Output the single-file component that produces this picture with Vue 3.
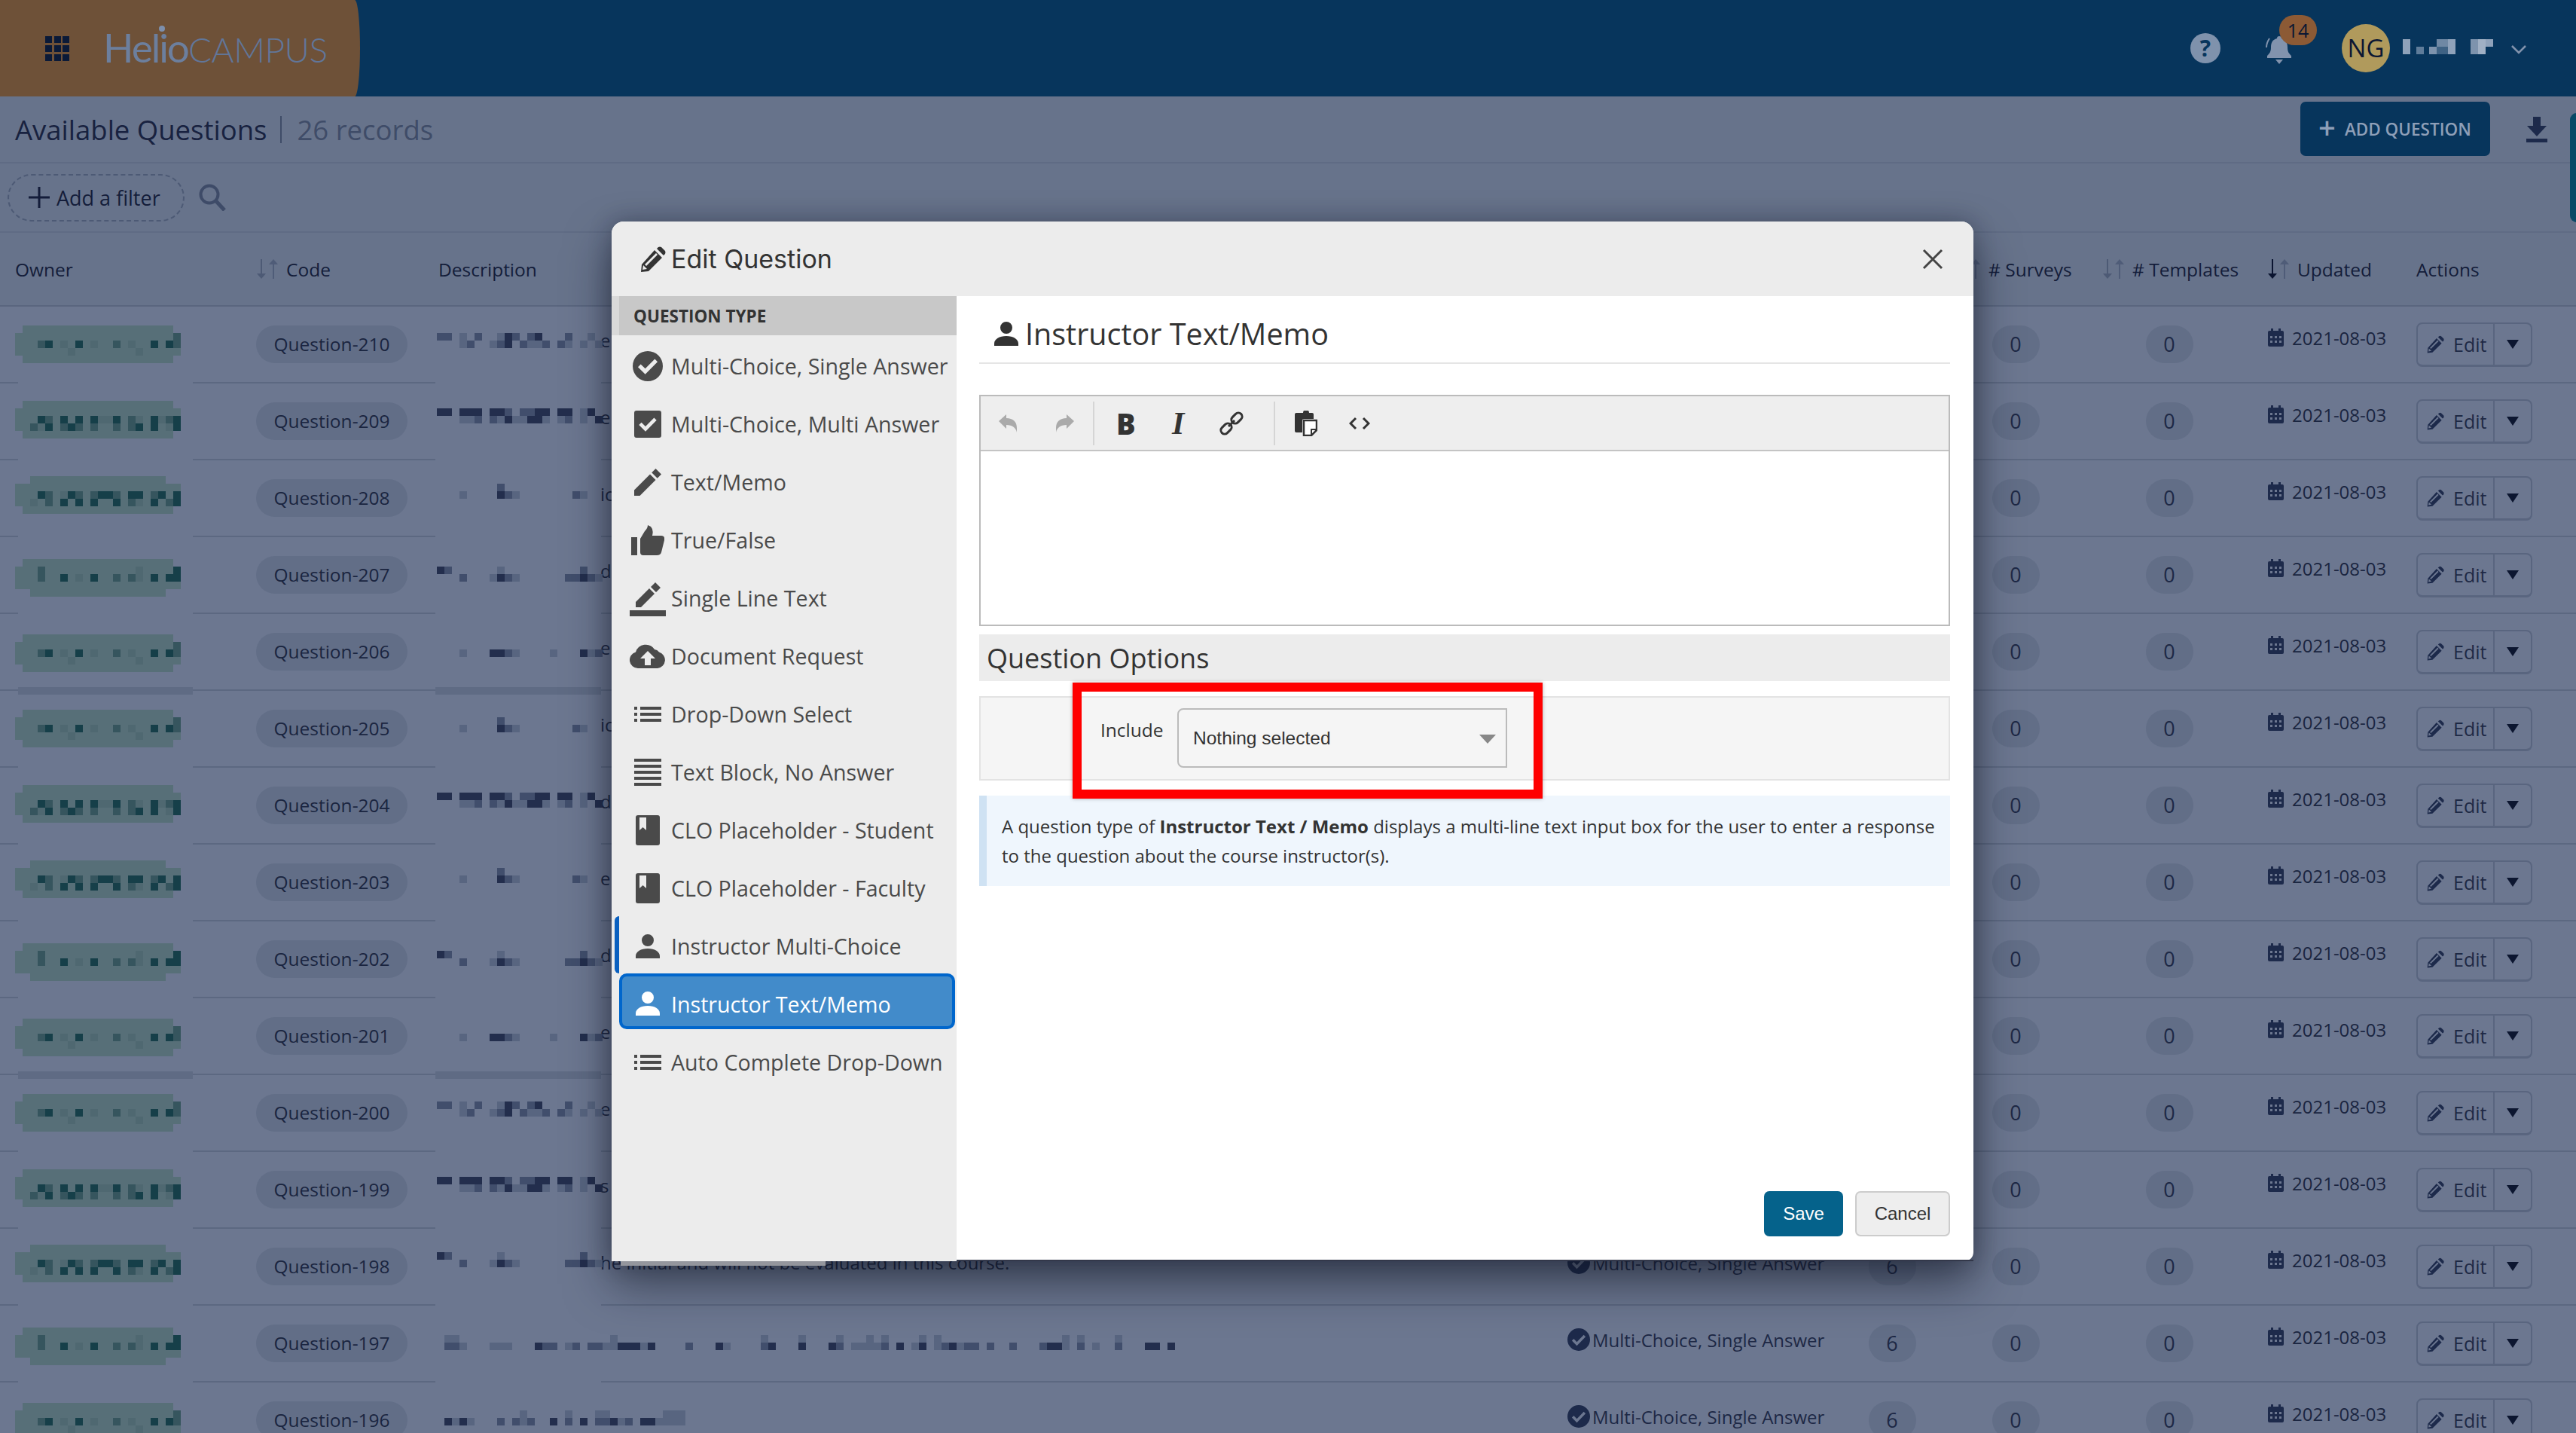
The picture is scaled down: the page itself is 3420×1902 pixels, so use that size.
<script setup>
const rowCodes = Array.from({ length: 15 }, (_, i) => 210 - i)
const tails = ['e', 'e', 'ic', 'd', 'e', 'ic', 'd', 'e', 'd', 'e', 'e', 's', 'he initial and will not be evaluated in this course.', '', '']
const rows = rowCodes.map((c, i) => ({ code: 'Question-' + c, tail: tails[i], uses: '6' }))

const icons = {
  circle: { w: 40, h: 40, vb: '0 0 24 24', d: 'M12 0a12 12 0 1 0 0 24a12 12 0 1 0 0-24z M10 18.5L4.2 12.7l2.2-2.2L10 14l7.6-7.7 2.2 2.2z' },
  square: { w: 36, h: 36, vb: '0 0 24 24', d: 'M2 0h20a2 2 0 0 1 2 2v20a2 2 0 0 1-2 2H2a2 2 0 0 1-2-2V2a2 2 0 0 1 2-2z M10 18.5L4.2 12.7l2.2-2.2L10 14l7.6-7.7 2.2 2.2z' },
  pencil: { w: 36, h: 36, vb: '0 0 24 24', d: 'M0 24v-5L14 5l5 5L5 24z M15.5 3.5L19 0l5 5-3.5 3.5z' },
  thumb: { w: 44, h: 40, vb: '0 0 44 40', d: 'M0 16h8v24H0z M12 18L18 8Q22 4 22 0L26 2Q30 6 28 14H40Q45 14 44 20L40 36Q39 40 34 40H16Q12 40 12 36z' },
  line: { w: 48, h: 48, vb: '0 0 48 48', d: 'M0 40h48v8H0z M8 36v-7L26 11l7 7-18 18z M28 9l6-6 7 7-6 6z' },
  cloud: { w: 48, h: 32, vb: '0 0 48 32', d: 'M11 32a11 11 0 0 1-3-21.6A14 14 0 0 1 33 7a9 9 0 0 1 6 3.5 11 11 0 0 1-2 21.5z M24 9L34 19h-6v9h-8v-9h-6z' },
  list: { w: 36, h: 20, vb: '0 0 36 20', d: 'M0 0h4v4H0z M0 8h4v4H0z M0 16h4v4H0z M8 0h28v4H8z M8 8h28v4H8z M8 16h28v4H8z' },
  block: { w: 36, h: 36, vb: '0 0 36 36', d: 'M0 0h36v4H0z M0 8h36v4H0z M0 16h36v4H0z M0 24h36v4H0z M0 32h36v4H0z' },
  book: { w: 32, h: 40, vb: '0 0 32 40', d: 'M3 0h26a3 3 0 0 1 3 3v34a3 3 0 0 1-3 3H3a3 3 0 0 1-3-3V3a3 3 0 0 1 3-3z M5 3h9v17l-4.5-4L5 20z' },
  user: { w: 32, h: 32, vb: '0 0 32 32', d: 'M16 0a8 8 0 1 0 0 16a8 8 0 1 0 0-16z M0 32v-3c0-6 7-10 16-10s16 4 16 10v3z' }
}
const types = [
  ['Multi-Choice, Single Answer', 'circle'], ['Multi-Choice, Multi Answer', 'square'], ['Text/Memo', 'pencil'],
  ['True/False', 'thumb'], ['Single Line Text', 'line'], ['Document Request', 'cloud'], ['Drop-Down Select', 'list'],
  ['Text Block, No Answer', 'block'], ['CLO Placeholder - Student', 'book'], ['CLO Placeholder - Faculty', 'book'],
  ['Instructor Multi-Choice', 'user'], ['Instructor Text/Memo', 'user'], ['Auto Complete Drop-Down', 'list']
].map(([label, icon]) => ({ label, icon: icons[icon] }))

const heads = [
  { label: 'Owner', cls: 'h-owner' },
  { label: 'Code', cls: 'h-code', sort: true },
  { label: 'Description', cls: 'h-desc' },
  { label: '', cls: 'h-type' },
  { label: '# Surveys', cls: 'h-surveys', sort: true },
  { label: '# Templates', cls: 'h-templates', sort: true },
  { label: 'Updated', cls: 'h-updated', sort: true, active: true },
  { label: 'Actions', cls: 'h-actions' }
]

const pencilFA = 'M19 5l10 10L11 33l-10 1 1-10z M4 25l-1 6 6-1z M6 24l2 2 15-15-2-2z M22 3l2-2q2-1 4 0l5 5q1 2 0 4l-2 2z'

const ownerPatterns = [
  { shape: 'a', cells: ['...................2', '.23.1.3.1..2.1..3.32', '.....1........1.....'] },
  { shape: 'a', cells: ['....................', '.32.3.3.3113.21.3123', '213.232.2..2.23.3.13'] },
  { shape: 'c', cells: ['....................', '.32.132.2332.33.23.3', '1.2.3.3.3..3.21.3.23'] },
  { shape: 'd', cells: ['.2............1....3', '.2..3.1.3..2.21.3.33', '....................'] }
]
const ownerOrder = [0, 1, 2, 3, 0, 0, 1, 2, 3, 0, 0, 1, 2, 3, 0]
const ownerFill = { 1: '#4f6871', 2: '#36555e', 3: '#163f49' }
const descFill = { 1: '#586580', 2: '#414e6c', 3: '#232e4d' }

const descPatterns = [
  ['22.1.2..132.23...2..1.', '...12..123.2112.21.1.1'],
  ['33.333.332.2233.33.13.', '...112.21311331.12.1.3'],
  ['........2.............', '...1....321.......21..'],
  ['32......1..........2..', '...2...1321......22321'],
  ['......................', '...1...3321....1...312']
]
const wide = (seed, cols) => {
  let s = seed
  const next = () => (s = (s * 9301 + 49297) % 233280) / 233280
  const top = []
  const low = []
  let gap = 0
  for (let i = 0; i < cols; i++) {
    if (gap > 0) { top.push('.'); low.push('.'); gap--; continue }
    const r = next()
    top.push(r < 0.18 ? '1' : '.')
    low.push(r < 0.82 ? String(1 + Math.floor(next() * 3)) : '.')
    if (next() < 0.22) gap = 1 + Math.floor(next() * 3)
  }
  return [top.join(''), low.join('')]
}
const descOrder = [0, 1, 2, 3, 4, 2, 1, 2, 3, 4, 0, 1, 3, wide(17, 98), wide(43, 33)]

const mosaic = []
ownerOrder.forEach((p, i) => {
  const top = Math.round((456 + 102 * i - 27) / 10) * 10 + 2
  const pat = ownerPatterns[p]
  const base = '#576f78'
  const add = (x, y, w, h, fill) => mosaic.push({ x, y, w, h, fill })
  const line = 509 + 102 * i
  const band = i === 4 || i === 9
  add(24, line - (band ? 5 : 2), 232, band ? 10 : 6, band ? '#5f6b84' : '#6c7790')
  add(578, line - (band ? 5 : 2), 220, band ? 10 : 6, band ? '#5f6b84' : '#6c7790')
  if (pat.shape === 'a') {
    add(30, top, 200, 50, base); add(20, top + 10, 220, 30, base)
  } else if (pat.shape === 'c') {
    add(40, top, 180, 10, base); add(20, top + 10, 220, 30, base); add(30, top + 40, 200, 10, base)
  } else {
    add(30, top, 200, 10, base); add(20, top + 10, 220, 30, base); add(40, top + 40, 180, 10, base)
  }
  pat.cells.forEach((row, r) => {
    [...row].forEach((c, k) => {
      if (c !== '.') add(40 + k * 10, top + 10 + r * 10, 10, 10, ownerFill[c])
    })
  })
  const d = typeof descOrder[i] === 'number' ? descPatterns[descOrder[i]] : descOrder[i]
  d.forEach((row, r) => {
    [...row].forEach((c, k) => {
      if (c !== '.') add(580 + k * 10, top + 10 + r * 10, 10, 10, descFill[c])
    })
  })
})
const nameCells = [
  [3190, 52, 10, 20, '#8fa2ba'], [3208, 62, 10, 10, '#5f7c9a'], [3225, 62, 10, 10, '#7d93ad'],
  [3235, 52, 15, 10, '#6f88a4'], [3235, 62, 15, 10, '#3e6284'], [3250, 52, 10, 20, '#8fa2ba'],
  [3280, 52, 10, 20, '#7d93ad'], [3290, 52, 10, 20, '#a0b0c4'], [3300, 52, 10, 10, '#8fa2ba']
]
nameCells.forEach(([x, y, w, h, fill]) => mosaic.push({ x, y, w, h, fill }))
</script>

<template>
  <div class="page">
    <header class="topbar">
      <div class="brand">
        <span class="grid-icon"><i v-for="n in 9" :key="n"></i></span>
        <span class="logo"><b>Helio</b><em>CAMPUS</em></span>
      </div>
      <div class="top-right">
        <span class="help">?</span>
        <span class="bell">
          <svg width="38" height="40" viewBox="0 0 38 40"><path fill="#8293ad" d="M19 3a3 3 0 0 1 3 3c6 1.500 8 6 8 12 0 6 2 8 5 11v3H3v-3c3-3 5-5 5-11 0-6 2-10.500 8-12a3 3 0 0 1 3-3z M14 34h10l-5 6z"/><path fill="none" stroke="#8293ad" stroke-width="2" d="M6 6Q2 12 2 18"/></svg>
          <span class="badge">14</span>
        </span>
        <span class="avatar">NG</span>
        <svg class="chev" width="20" height="12" viewBox="0 0 20 12"><path d="M1 1l9 9 9-9" fill="none" stroke="#8293ad" stroke-width="2.500"/></svg>
      </div>
    </header>

    <section class="titlebar">
      <h1>Available Questions<span class="bar"></span><small>26 records</small></h1>
      <button class="add"><span class="plus">+</span>ADD QUESTION</button>
      <svg class="dl" width="28" height="34" viewBox="0 0 28 34"><path fill="#1d2a4b" d="M9 0h10v12h8L14 26 1 12h8z M0 29h28v5H0z"/></svg>
    </section>

    <section class="filters">
      <span class="filter">
        <svg width="28" height="28" viewBox="0 0 28 28"><path d="M14 0v28M0 14h28" stroke="#141d3a" stroke-width="3"/></svg>
        Add a filter
      </span>
      <svg width="36" height="36" viewBox="0 0 36 36"><circle cx="14" cy="14" r="11.500" fill="none" stroke="#3e4b68" stroke-width="4"/><path d="M22 22l12 13" stroke="#3e4b68" stroke-width="5"/></svg>
    </section>

    <div class="thead">
      <div v-for="h in heads" :key="h.cls" class="th" :class="h.cls">
        <svg v-if="h.sort" class="sort" width="29" height="26" viewBox="0 0 29 26">
          <path :fill="h.active ? '#0a1430' : '#4d5a75'" d="M6 0h2v19h5l-6 7-6-7h5z"/>
          <path fill="#4d5a75" opacity=".9" d="M22 26h2V7h5L23 0l-6 7h5z"/>
        </svg>
        {{ h.label }}
      </div>
    </div>

    <div class="tbody">
      <div v-for="r in rows" :key="r.code" class="tr">
        <div class="td"></div>
        <div class="td"><span class="pill code">{{ r.code }}</span></div>
        <div class="td desc">{{ r.tail }}</div>
        <div class="td kind">
          <svg width="30" height="30" viewBox="0 0 24 24"><path fill="#1d2a4b" fill-rule="evenodd" d="M12 0a12 12 0 1 0 0 24a12 12 0 1 0 0-24z M10 18.500L4.700 13.200l2-2L10 14.500l7.300-7.500 2 2z"/></svg>
          Multi-Choice, Single Answer
        </div>
        <div class="td mid"><span class="pill num">{{ r.uses }}</span></div>
        <div class="td mid"><span class="pill num">0</span></div>
        <div class="td mid"><span class="pill num">0</span></div>
        <div class="td date">
          <svg width="21" height="24" viewBox="0 0 21 24"><path fill="#1d2a4b" fill-rule="evenodd" d="M4 0h3v3h7V0h3v3h2a2 2 0 0 1 2 2v17a2 2 0 0 1-2 2H2a2 2 0 0 1-2-2V5a2 2 0 0 1 2-2h2z M3 10v3h3v-3z M9 10v3h3v-3z M15 10v3h3v-3z M3 16v3h3v-3z M9 16v3h3v-3z M15 16v3h3v-3z"/></svg>
          2021-08-03
        </div>
        <div class="td acts">
          <span class="edit">
            <svg width="23" height="24" viewBox="0 0 34 34"><path fill="#1d2a4b" fill-rule="evenodd" :d="pencilFA"/></svg>
            Edit
          </span>
          <span class="drop"><i></i></span>
        </div>
      </div>
    </div>

    <svg class="mosaic" width="3420" height="1902" viewBox="0 0 3420 1902">
      <rect v-for="(m, i) in mosaic" :key="i" :x="m.x" :y="m.y" :width="m.w" :height="m.h" :fill="m.fill" />
    </svg>

    <div class="side-tab"></div>

    <div class="modal">
      <div class="modal-head">
        <svg width="34" height="34" viewBox="0 0 34 34"><path fill="#333" fill-rule="evenodd" :d="pencilFA"/></svg>
        <span>Edit Question</span>
        <svg class="close" width="28" height="28" viewBox="0 0 28 28"><path d="M2 2l24 24M26 2L2 26" stroke="#444" stroke-width="3"/></svg>
      </div>
      <div class="modal-body">
        <aside class="sidebar">
          <div class="side-title">QUESTION TYPE</div>
          <div
            v-for="(t, i) in types"
            :key="t.label"
            class="type"
            :class="{ selected: i === 11, ghost: i === 10 }"
          >
            <span class="slot">
              <svg :width="t.icon.w" :height="t.icon.h" :viewBox="t.icon.vb"><path fill="currentColor" fill-rule="evenodd" :d="t.icon.d"/></svg>
            </span>
            {{ t.label }}
          </div>
        </aside>
        <main class="content">
          <h2 class="q-title">
            <svg width="32" height="32" viewBox="0 0 32 32"><path fill="#333" d="M16 0a8 8 0 1 0 0 16a8 8 0 1 0 0-16z M0 32v-3c0-6 7-10 16-10s16 4 16 10v3z"/></svg>
            Instructor Text/Memo
          </h2>
          <div class="editor">
            <div class="toolbar">
              <div class="tool-group g1">
                <svg width="24" height="26" viewBox="0 0 24 24"><path fill="#aaa" d="M0 9L10 0v5c9 0 14 5 14 13v6c-1-6-6-10-14-10v5z"/></svg>
                <svg width="24" height="26" viewBox="0 0 24 24"><path fill="#aaa" d="M24 9L14 0v5C5 5 0 10 0 18v6c1-6 6-10 14-10v5z"/></svg>
              </div>
              <div class="tool-group g2">
                <span class="t-b">B</span>
                <span class="t-i">I</span>
                <svg width="32" height="32" viewBox="0 0 32 32"><g fill="none" stroke="#333" stroke-width="3"><rect x="-8" y="-5" width="16" height="10" rx="5" transform="translate(9 23) rotate(-45)"/><rect x="-8" y="-5" width="16" height="10" rx="5" transform="translate(23 9) rotate(-45)"/><path d="M12 20l8-8"/></g></svg>
              </div>
              <div class="tool-group g3">
                <svg width="30" height="34" viewBox="0 0 30 34"><path fill="#333" d="M9 3h2a4 4 0 0 1 8 0h4a2 2 0 0 1 2 2v6H12a2 2 0 0 0-2 2v16H2a2 2 0 0 1-2-2V5a2 2 0 0 1 2-2z"/><path fill="#fff" stroke="#333" stroke-width="2.500" d="M12 13h17v13l-7 7H12z"/><path fill="none" stroke="#333" stroke-width="2" d="M29 25h-7v8"/></svg>
                <svg width="28" height="18" viewBox="0 0 28 18"><path d="M9 2L2 9l7 7M19 2l7 7-7 7" fill="none" stroke="#333" stroke-width="3"/></svg>
              </div>
            </div>
            <div class="edit-area"></div>
          </div>
          <div class="opt-band">Question Options</div>
          <div class="well">
            <label>Include</label>
            <div class="select"><span>Nothing selected</span><i></i></div>
          </div>
          <div class="info">
            A question type of <b>Instructor Text / Memo</b> displays a multi-line text input box for the user to enter a response to the question about the course instructor(s).
          </div>
          <div class="foot">
            <button class="save">Save</button>
            <button class="cancel">Cancel</button>
          </div>
        </main>
      </div>
      <div class="under-bar"></div>
      <div class="redbox"></div>
    </div>
  </div>
</template>

<style scoped>
.page { position: relative; width: 3420px; height: 1902px; overflow: hidden; background: #6c7790; font-family: "Open Sans", sans-serif; color: #1a2540; }
.topbar { height: 128px; background: #07355c; display: flex; justify-content: space-between; }
.brand { width: 478px; background: #6e5138; border-radius: 0 7px 7px 0 / 0 64px 64px 0; display: flex; align-items: center; padding-left: 60px; box-sizing: border-box; }
.grid-icon { display: grid; grid-template-columns: repeat(3, 9px); gap: 3px 2.5px; margin-right: 45px; }
.grid-icon i { width: 9px; height: 9px; background: #0b1a38; }
.logo { display: flex; align-items: baseline; font-family: Lato, sans-serif; position: relative; margin-top: -4px; }
.logo b { font-weight: 400; font-size: 53px; letter-spacing: -2px; color: #6c7f9e; }
.logo em { font-style: normal; font-weight: 300; font-size: 46px; color: #61769a; letter-spacing: -0.500px; }
.logo::after { content: ""; position: absolute; left: 74px; top: 3px; width: 8px; height: 8px; border-radius: 50%; background: #7d8fac; }
.top-right { display: flex; align-items: center; position: relative; padding-right: 66px; }
.help { width: 40px; height: 40px; border-radius: 50%; background: #7f92ac; color: #07355c; font-weight: 700; font-size: 30px; line-height: 40px; text-align: center; margin-right: 59px; }
.bell { position: relative; width: 38px; height: 40px; margin-right: 64px; margin-top: 2px; }
.badge { position: absolute; left: 19px; top: -25px; width: 50px; height: 40px; border-radius: 20px; background: #8c5a35; color: #0a1733; font-size: 25px; line-height: 40px; text-align: center; }
.avatar { width: 64px; height: 64px; border-radius: 50%; background: #b09a5c; color: #0b1733; font-size: 33px; line-height: 64px; text-align: center; margin-right: 181px; }
.chev { position: absolute; right: 66px; top: 60px; }

.titlebar { height: 87px; border-bottom: 2px solid #5f6b84; background: #67738b; display: flex; align-items: center; padding: 0 38px 0 20px; }
h1 { flex: 1; margin: 0; font-size: 36.500px; font-weight: 400; color: #182240; display: flex; align-items: center; }
.bar { width: 2px; height: 36px; background: #3f4c68; margin: 0 20px 0 18px; }
h1 small { font-size: 36.500px; color: #3f4c68; }
.add { width: 252px; height: 72px; margin-top: -1px; border: 0; border-radius: 7px; background: #07355c; color: #8e9fb8; font: 600 22.500px "Open Sans", sans-serif; display: flex; align-items: center; padding: 0 0 0 24px; white-space: nowrap; }
.plus { font-size: 40px; font-weight: 600; line-height: 1; margin-right: 12px; margin-top: -4px; }
.dl { margin-left: 48px; }

.filters { height: 90px; border-bottom: 2px solid #5f6b84; background: #67738b; display: flex; align-items: center; padding-left: 10px; gap: 19px; }
.filter { width: 235px; height: 63px; box-sizing: border-box; border: 2px dashed #4d5a75; border-radius: 32px; display: flex; align-items: center; gap: 9px; padding-left: 26px; font-size: 27px; color: #141d3a; white-space: nowrap; }

.thead { height: 96px; border-bottom: 2px solid #5a667f; background: #67738b; display: grid; grid-template-columns: 340px 242px 1490px 528px 191px 219px 198px 212px; align-items: center; font-size: 24.500px; color: #141d3a; }
.th { display: flex; align-items: center; white-space: nowrap; }
.h-owner { padding-left: 20px; }
.h-surveys { gap: 11px; }
.h-code, .h-templates, .h-updated { gap: 11px; }
.sort { flex: none; }

.tr { height: 102px; box-sizing: border-box; border-bottom: 2px solid #5c6881; display: grid; grid-template-columns: 340px 242px 1490px 399px 82px 246px 162px 247px 212px; align-items: center; font-size: 24.500px; }
.td { white-space: nowrap; }
.pill { display: inline-block; height: 50px; line-height: 50px; border-radius: 25px; background: #626e87; text-align: center; color: #1a2540; }
.code { width: 201px; }
.num { width: 63px; font-size: 27px; color: #1d2845; }
.mid { text-align: center; }
.desc { padding-left: 215px; margin-bottom: 12px; overflow: visible; font-size: 24px; }
.kind { padding-left: 9px; display: flex; align-items: center; gap: 3px; color: #1d2845; margin-bottom: 10px; font-size: 24px; }
.date { padding-left: 50px; display: flex; align-items: center; gap: 11px; margin-bottom: 18px; font-size: 24px; }
.acts { display: flex; }
.edit, .drop { height: 59px; box-sizing: border-box; border: 2px solid #59657f; border-bottom-width: 3px; display: flex; align-items: center; }
.edit { width: 104px; border-radius: 8px 0 0 8px; padding-left: 12px; gap: 12px; font-size: 25px; color: #1e2945; }
.drop { width: 50px; border-left: 0; border-radius: 0 8px 8px 0; justify-content: center; }
.drop i { width: 0; height: 0; border: 8px solid transparent; border-top: 12px solid #0c1630; border-bottom: 0; }

.mosaic { position: absolute; left: 0; top: 0; pointer-events: none; }
.side-tab { position: absolute; right: -10px; top: 150px; width: 18px; height: 145px; border-radius: 14px; background: #0a4a66; }

.modal { position: absolute; left: 812px; top: 294px; width: 1808px; height: 1380px; display: flex; flex-direction: column; background: #fff; border-radius: 16px 16px 12px 0; box-shadow: 0 30px 60px rgba(15, 20, 35, .55), 0 0 30px rgba(15, 20, 35, .3); color: #333; }
.modal-head { height: 99px; flex: none; background: #ececec; border-radius: 16px 16px 0 0; display: flex; align-items: center; padding-left: 38px; gap: 7px; font-family: Inter, sans-serif; font-size: 34px; color: #333; }
.close { margin-left: auto; margin-right: 40px; }
.modal-body { flex: 1; display: flex; min-height: 0; }
.sidebar { width: 458px; flex: none; background: #ececec; color: #4a4a4a; font-size: 28.600px; }
.side-title { height: 52px; box-sizing: border-box; background: #c8c8c8; border-left: 10px solid #d9d9d9; padding-left: 19px; font-size: 22.500px; font-weight: 700; color: #333; line-height: 54px; margin-bottom: 2px; }
.type { height: 77px; box-sizing: border-box; display: flex; align-items: center; padding-left: 24px; white-space: nowrap; position: relative; }
.slot { width: 48px; margin-right: 7px; display: flex; justify-content: center; flex: none; }
.selected { height: 74px; margin: -2px 2px 5px 10px; padding: 6px 0 0 10px; border: 4px solid #0066cc; border-radius: 10px; background: #428bca; color: #fff; }
.ghost::before { content: ""; position: absolute; left: 4px; top: -1px; bottom: 2px; width: 6px; background: #0a60c0; border-radius: 6px 0 0 6px; }
.content { flex: 1; position: relative; display: flex; flex-direction: column; padding: 0 31px 0 30px; border-bottom: 2px solid #33384a; min-width: 0; }
.q-title { height: 90px; box-sizing: border-box; flex: none; border-bottom: 2px solid #e5e5e5; margin: 0 0 41px; padding: 12px 0 0 20px; display: flex; align-items: center; gap: 9px; font-weight: 400; font-size: 39.500px; color: #333; }
.editor { height: 307px; flex: none; box-sizing: border-box; border: 2px solid #bbb; background: #fff; }
.toolbar { height: 71px; background: #eee; border-bottom: 2px solid #c4c4c4; display: flex; align-items: center; box-sizing: content-box; }
.tool-group { height: 58px; display: flex; align-items: center; }
.g1 { width: 151px; gap: 52px; padding-left: 24px; box-sizing: border-box; border-right: 2px solid #d5d5d5; }
.g2 { width: 240px; box-sizing: border-box; border-right: 2px solid #d5d5d5; padding-left: 29px; }
.g3 { padding-left: 26px; gap: 42px; }
.t-b { font-weight: 800; font-size: 38px; color: #333; width: 74px; }
.t-i { font-family: "Liberation Serif", serif; font-style: italic; font-weight: 700; font-size: 42px; color: #333; width: 63px; }
.opt-band { height: 62px; flex: none; margin-top: 11px; background: #ececec; padding-left: 10px; line-height: 64px; font-size: 36px; color: #333; }
.well { height: 112px; flex: none; box-sizing: border-box; margin-top: 20px; background: #f5f5f5; border: 2px solid #e3e3e3; display: flex; padding: 14px 0 0 159px; }
.well label { width: 102px; margin-top: 12px; font-size: 24.500px; line-height: 34px; color: #333; }
.select { width: 438px; height: 79px; box-sizing: border-box; border: 2px solid #bbb; border-radius: 8px 0 0 8px; display: flex; align-items: center; justify-content: space-between; padding: 0 13px 0 19px; font-family: "Liberation Sans", sans-serif; font-size: 24.500px; color: #333; }
.select i { width: 0; height: 0; border: 11.500px solid transparent; border-top: 12px solid #888; border-bottom: 0; margin-top: 3px; }
.info { height: 120px; flex: none; box-sizing: border-box; margin-top: 20px; background: #eff6fd; border-left: 10px solid #cfe2f3; padding: 21px 0 0 20px; font-size: 24px; line-height: 39px; color: #333; }
.foot { margin-top: auto; display: flex; justify-content: flex-end; gap: 16px; padding-bottom: 31px; }
.foot button { height: 60px; border-radius: 7px; font: 24px "Liberation Sans", sans-serif; padding: 0; }
.save { width: 105px; background: #05628b; border: 0; color: #fff; }
.cancel { width: 126px; background: #eee; border: 2px solid #ccc; color: #333; }
.under-bar { position: absolute; left: 12px; top: 100%; width: 272px; height: 6px; background: #94969d; }
.redbox { position: absolute; left: 612px; top: 612px; width: 624px; height: 154px; box-sizing: border-box; border: 12px solid #f00; box-shadow: 0 0 5px rgba(0, 0, 0, .3); }
</style>
